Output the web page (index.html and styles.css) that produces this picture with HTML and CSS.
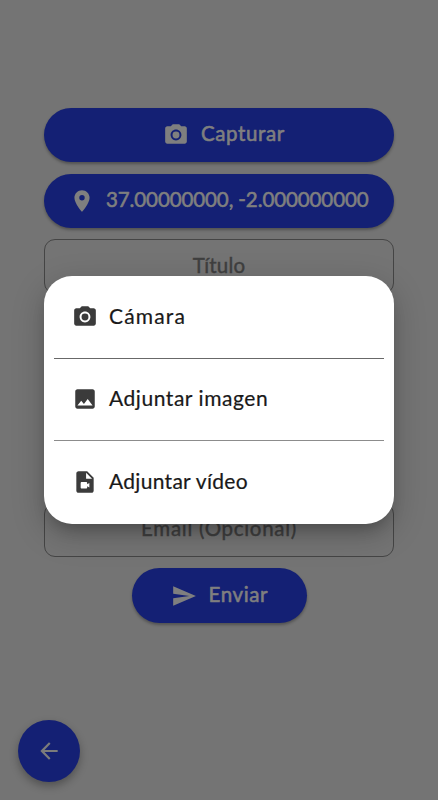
FILE: index.html
```html
<!DOCTYPE html>
<html lang="es">
<head>
<meta charset="utf-8">
<meta name="viewport" content="width=device-width, initial-scale=1">
<title>Capturar</title>
<link rel="stylesheet" href="styles.css">
</head>
<body>
<main class="form">
  <button class="pill capture"><svg viewBox="0 0 24 24"><circle cx="12" cy="12" r="3.2"/><path d="M9 2 7.170 4H4c-1.100 0-2 .9-2 2v12c0 1.100.9 2 2 2h16c1.100 0 2-.9 2-2V6c0-1.100-.9-2-2-2h-3.170L15 2H9zm3 15c-2.760 0-5-2.240-5-5s2.240-5 5-5 5 2.240 5 5-2.240 5-5 5z"/></svg><span>Capturar</span></button>
  <button class="pill location"><svg viewBox="0 0 24 24"><path d="M12 2C8.130 2 5 5.130 5 9c0 5.250 7 13 7 13s7-7.750 7-13c0-3.870-3.130-7-7-7zm0 9.500a2.500 2.500 0 1 1 0-5 2.500 2.500 0 0 1 0 5z"/></svg><span>37.00000000, -2.000000000</span></button>
  <div class="field title"><span>Título</span></div>
  <div class="field notes"></div>
  <div class="field email"><span>Email (Opcional)</span></div>
  <button class="pill send"><svg viewBox="0 0 24 24"><path d="M2.010 21 23 12 2.010 3 2 10l15 2-15 2z"/></svg><span>Enviar</span></button>
</main>
<button class="back" aria-label="Volver"><svg viewBox="0 0 24 24"><path d="M20 11H7.830l5.590-5.590L12 4l-8 8 8 8 1.410-1.410L7.830 13H20v-2z"/></svg></button>
<div class="dialog" role="dialog">
  <div class="option camera"><svg viewBox="0 0 24 24"><circle cx="12" cy="12" r="3.2"/><path d="M9 2 7.170 4H4c-1.100 0-2 .9-2 2v12c0 1.100.9 2 2 2h16c1.100 0 2-.9 2-2V6c0-1.100-.9-2-2-2h-3.170L15 2H9zm3 15c-2.760 0-5-2.240-5-5s2.240-5 5-5 5 2.240 5 5-2.240 5-5 5z"/></svg><span>Cámara</span></div>
  <div class="option image"><svg viewBox="0 0 24 24"><path d="M21 19V5c0-1.100-.9-2-2-2H5c-1.100 0-2 .9-2 2v14c0 1.100.9 2 2 2h14c1.100 0 2-.9 2-2zM8.500 13.500l2.500 3.010L14.500 12l4.500 6H5l3.500-4.500z"/></svg><span>Adjuntar imagen</span></div>
  <div class="option video"><svg viewBox="0 0 24 24"><path d="M14 2H6c-1.100 0-2 .9-2 2v16c0 1.100.9 2 2 2h12c1.100 0 2-.9 2-2V8l-6-6zm-1 7V3.500L18.500 9H13zm1 5 2-1.060v4.120L14 16v1c0 .55-.45 1-1 1H9c-.55 0-1-.45-1-1v-4c0-.55.45-1 1-1h4c.55 0 1 .45 1 1v1z"/></svg><span>Adjuntar vídeo</span></div>
</div>
</body>
</html>
```
FILE: styles.css
```css
* { box-sizing: border-box; }
body {
  margin: 0;
  height: 800px;
  overflow: hidden;
  position: relative;
  background: #747474;
  font: 400 20.5px/26px Lato, "Liberation Sans", sans-serif;
}
button { border: 0; padding: 0; font: inherit; }
svg { width: 26px; height: 26px; fill: currentColor; flex: none; }
span { white-space: nowrap; }
.form {
  padding: 107.700px 44px 0;
  display: flex;
  flex-direction: column;
  align-items: center;
  gap: 11.5px;
}
.pill {
  width: 350px;
  height: 54.400px;
  border-radius: 28px;
  background: #142074;
  color: #7f7f7f;
  display: flex;
  align-items: center;
  box-shadow: 0 2px 3px rgba(0,0,0,.3);
}
.pill span { margin-top: -3px; -webkit-text-stroke: .6px; }
.capture { padding-left: 119px; gap: 12px; letter-spacing: .6px; }
.location { padding-left: 25px; gap: 11px; letter-spacing: -.1px; }
.send { width: 175px; padding-left: 39px; gap: 12px; letter-spacing: .6px; }
.field {
  width: 350px;
  height: 54.300px;
  border: 1px solid #454545;
  border-radius: 11px;
  color: #3f3f3f;
  display: flex;
  align-items: center;
  justify-content: center;
  -webkit-text-stroke: .4px;
}
.field span { margin-top: -4px; }
.title { letter-spacing: .2px; }
.email { letter-spacing: .7px; }
.notes { height: 185.800px; }
.back {
  position: absolute;
  left: 18px;
  top: 720px;
  width: 62px;
  height: 62px;
  border-radius: 50%;
  background: #142074;
  color: #7b7b7b;
  display: flex;
  align-items: center;
  justify-content: center;
  box-shadow: 0 4px 9px rgba(0,0,0,.3);
}
.dialog {
  position: absolute;
  left: 44.400px;
  top: 276px;
  width: 349.200px;
  height: 247.500px;
  padding: 0 9.600px;
  border-radius: 28px;
  background: #fff;
  color: #3b3b3b;
  box-shadow: 0 10px 16px -6px rgba(0,0,0,.25), 0 10px 32px 2px rgba(0,0,0,.18);
}
.option {
  height: 82.500px;
  padding-left: 18px;
  display: flex;
  align-items: center;
  gap: 11px;
  font-size: 21px;
  border-bottom: 1px solid #686868;
}
.image { border-bottom-color: #8c8c8c; }
.option:last-child { border-bottom: 0; }
.option span { color: #191919; margin-top: -2px; -webkit-text-stroke: .2px; }
.camera { letter-spacing: 1.150px; }
.image { letter-spacing: .550px; }
.video { letter-spacing: .300px; }
```
